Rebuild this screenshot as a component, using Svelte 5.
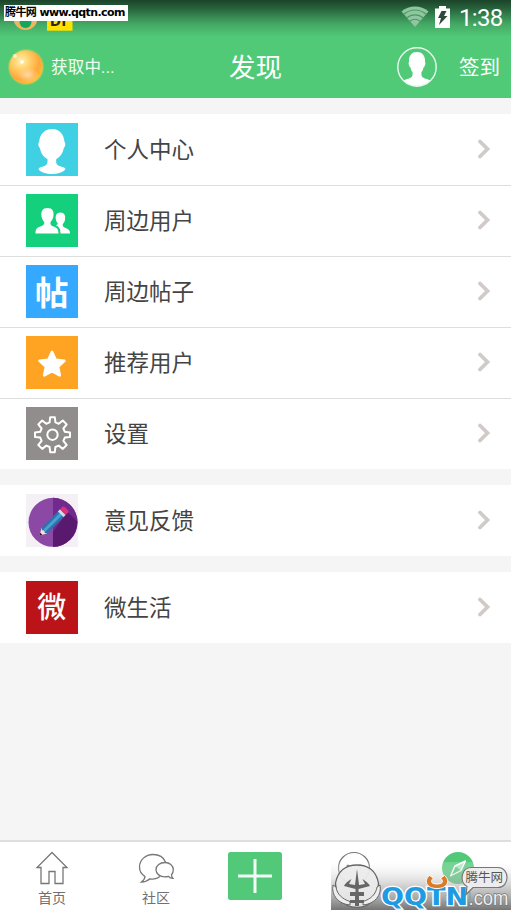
<script>
  const groups = [
    [
      { id: 'person', label: '个人中心', color: '#40d0e4' },
      { id: 'nearby', label: '周边用户', color: '#14cf7b' },
      { id: 'post', label: '周边帖子', color: '#35a9ff' },
      { id: 'star', label: '推荐用户', color: '#ffa322' },
      { id: 'gear', label: '设置', color: '#918d8c' }
    ],
    [{ id: 'pencil', label: '意见反馈', color: '#f4f0f5' }],
    [{ id: 'micro', label: '微生活', color: '#bb1418' }]
  ];
</script>

<div class="screen">
  <header>
    <div class="status">
      <svg class="notice" width="80" height="32" viewBox="0 0 80 32">
        <circle cx="25.500" cy="18" r="12" fill="#eeb660" />
        <ellipse cx="25.500" cy="22" rx="6" ry="6" fill="#16a65a" />
        <path d="M47 12h25.500v18.700H47z" fill="#ffe100" />
        <text x="50" y="26" font-size="17" font-weight="700" fill="#2b2a10">Df</text>
      </svg>
      <div class="system">
        <svg width="28" height="22" viewBox="0 0 28 22">
          <path d="M14 21 .5 5.500C8-1.200 20-1.200 27.500 5.500Z" fill="#8fc6a0" />
          <path d="M2.500 8.500c7-6 16-6 23 0M5.500 12c5-4.300 12-4.300 17 0M8.500 15.500c3.300-2.700 7.700-2.700 11 0" fill="none" stroke="#4c9a66" stroke-width="1.200" />
        </svg>
        <svg class="battery" width="15" height="22" viewBox="0 0 15 22">
          <path d="M0 2.500h4V0h7v2.500h4V22H0z" fill="#fff" />
          <path d="M6.500 5h5L9 10h3.500L4 19l2-7H3z" fill="#2f4a38" />
        </svg>
        <span class="time">1:38</span>
      </div>
    </div>
    <div class="bar">
      <div class="weather">
        <svg width="38" height="38" viewBox="0 0 38 38">
          <defs>
            <radialGradient id="sun" cx=".36" cy=".32" r=".72">
              <stop offset="0" stop-color="#fff3b0" />
              <stop offset=".35" stop-color="#ffd06a" />
              <stop offset=".75" stop-color="#ffa637" />
              <stop offset="1" stop-color="#ffc238" />
            </radialGradient>
            <radialGradient id="shine"><stop offset="0" stop-color="#ffe3bd" stop-opacity=".85" /><stop offset="1" stop-color="#ffd6a0" stop-opacity="0" /></radialGradient>
          </defs>
          <circle cx="19" cy="19" r="18" fill="#e8d34a" opacity=".35" />
          <circle cx="19" cy="19" r="16.800" fill="url(#sun)" />
          <ellipse cx="21" cy="27" rx="11" ry="8" fill="url(#shine)" />
          <circle cx="15" cy="14" r="1.700" fill="#fff" />
          <circle cx="8" cy="8" r="2" fill="#fff8cf" opacity=".8" />
        </svg>
        <span>获取中...</span>
      </div>
      <h1>发现</h1>
      <div class="sign">
        <svg width="42" height="42" viewBox="0 0 42 42">
          <defs><clipPath id="round"><circle cx="21" cy="21" r="19" /></clipPath></defs>
          <path clip-path="url(#round)" fill="#fff" d="M21 6c5.500 0 8.500 4 8 10 1 1-.2 5-1.500 5.500-.5 2-1 3.500-2 4.500-.5 5 1 5.500 5.500 7l6.500 3v6H4v-6l7-3c4.500-1.500 6-2 5.500-7-1-1-1.500-2.500-2-4.500-1.300-.5-2.500-4.500-1.500-5.500C12.500 10 15.500 6 21 6Z" />
          <circle cx="21" cy="21" r="19.200" fill="none" stroke="#e9f9ee" stroke-width="1.400" />
        </svg>
        <span>签到</span>
      </div>
    </div>
    <div class="source">腾牛网 www.qqtn.com</div>
  </header>

  <main>
    {#each groups as group}
      <section>
        {#each group as item}
          <div class="row">
            <div class="tile" style:background={item.color}>
              {#if item.id === 'post' || item.id === 'micro'}
                <span class={item.id}>{item.id === 'post' ? '帖' : '微'}</span>
              {:else}
                <svg width="52" height="52" viewBox="0 0 52 52">
                  {#if item.id === 'person'}
                    <path fill="#fff" d="M26 5c8 0 12 6 12.500 13 1.500 1 .7 5-.7 6-.8 5-3.800 9-7.500 11-.5 4 .2 6 3 7 3 1 6 1.500 6.200 3-2 3.300-8 5-13.500 5s-12-1.700-13.500-5c.2-1.500 3-2 6-3 2.600-1 3.300-3 3-7-4-2-6.800-6-7.600-11-1.500-1-2.200-5-.7-6C13.500 11 18 5 26 5Z" />
                  {:else if item.id === 'nearby'}
                    <path fill="#fff" d="M21.500 13c5 0 6.500 3.500 6 7.500-.3 3-1.500 5-3 6.500-.2 3 .5 3.500 3.500 4.700 3.500 1.300 4.500 3 4.500 6.800h-23c0-3.800.7-5.500 4.200-6.800 4-1.500 4.800-2 4.500-4.700-1.500-1.500-2.500-3.500-2.800-6.500-.4-4 1-7.500 6.100-7.500Z" />
                    <path fill="#fff" d="M34.500 17.500c4 0 5 3 4.600 6.500-.2 2.500-1.200 4-2.400 5.200 0 2.500.8 2.900 3.500 4 3 1.200 3.800 2.500 3.800 5.300h-9.500c0-4-1-6.500-4.500-8.200 1.300-.5 1.800-1 1.700-2-1-1-1.800-2.700-2-4.800-.3-3.200 1-6 4.800-6Z" />
                  {:else if item.id === 'star'}
                    <path fill="#fff" stroke="#fff" stroke-width="2.800" stroke-linejoin="round" d="m26 15 3.600 7.800 8.700 1-6.400 5.900 1.800 8.700-7.700-4.300-7.700 4.300 1.800-8.700-6.400-5.900 8.700-1z" />
                  {:else if item.id === 'gear'}
                    <g fill="none" stroke="#fff" stroke-width="2" stroke-linejoin="round" transform="translate(0 -.8)">
                      <circle cx="26.500" cy="27.500" r="5.200" />
                      <path d="M24.200 10h4.600l.6 5.200 3.300 1.400 4.100-3.300 3.900 3.900-3.300 4.100 1.400 3.300 5.200.6v4.600l-5.200.6-1.400 3.300 3.300 4.100-3.900 3.900-4.100-3.300-3.300 1.400-.6 5.200h-4.600l-.6-5.200-3.300-1.400-4.100 3.300-3.900-3.900 3.300-4.100-1.400-3.300-5.200-.6v-4.600l5.200-.6 1.400-3.300-3.300-4.100 3.900-3.900 4.100 3.300 3.300-1.400z" />
                    </g>
                  {:else}
                    <circle cx="27" cy="27.300" r="24.500" fill="#8b48a5" />
                    <path d="M27 2.800a24.500 24.500 0 0 1 0 49Z" fill="#702a8d" />
                    <path d="m41.500 17 9.600 9.500A24.500 24.500 0 0 1 27 51.800V37Z" fill="#58196f" />
                    <g transform="translate(13.500 40.500) rotate(-45)">
                      <path d="M0 0 7-4v8Z" fill="#f8dfcd" />
                      <path d="m0 0 2.500-1.500v3z" fill="#1c1722" />
                      <path d="M7-4h24v8H7l-1.500-2L7 0 5.500-2z" fill="#2875ae" />
                      <path d="M7-1.500h24v3H7z" fill="#4ba0d1" />
                      <path d="M30-4h3v8h-3z" fill="#d9d8e3" />
                      <path d="M33-4h3.500Q38-4 38-2v4q0 2-1.500 2H33z" fill="#dd307b" />
                    </g>
                  {/if}
                </svg>
              {/if}
            </div>
            <span class="label">{item.label}</span>
            <svg class="chevron" width="14" height="20" viewBox="0 0 14 20"><path d="m3 2.500 7.500 7.500L3 17.500" fill="none" stroke="#d0cbc8" stroke-width="3.800" stroke-linecap="round" /></svg>
          </div>
        {/each}
      </section>
    {/each}
  </main>

  <nav>
    <div class="tab">
      <svg width="36" height="36" viewBox="0 0 36 36"><path d="M18 2.500 3 17.500h4v16h8v-12h6v12h8v-16h4Z" fill="none" stroke="#777" stroke-width="1.300" /></svg>
      <span>首页</span>
    </div>
    <div class="tab">
      <svg width="36" height="36" viewBox="0 0 36 36" fill="none" stroke="#777" stroke-width="1.300">
        <path d="M27.500 12C25.500 7 21 4.500 15 4.500 7.500 4.500 1.500 10 1.500 17c0 4 2 7.300 5.500 9.500 0 2-1.500 4-3.500 5.500 4 0 6-1 8.500-3.200 4 .8 7 .2 10-2.300" />
        <path d="M27 12.500c-5 0-9 3-9 7.200s4 7.200 9 7.200c1.200 0 2.500-.2 3.500-.5 1 1.300 2.500 2 4.500 2-1-1-1.500-2.300-1.500-3.700 1.200-1.300 1.800-3 1.800-5 0-4.200-3.800-7.200-8.300-7.200Z" />
      </svg>
      <span>社区</span>
    </div>
    <div class="tab add">
      <svg width="54" height="48" viewBox="0 0 54 48"><rect width="54" height="48" rx="2.500" fill="#51c979" /><path d="M27 7v34M10 24h34" stroke="#f3fcf6" stroke-width="3" /></svg>
    </div>
    <div class="tab face">
      <svg width="36" height="36" viewBox="0 0 36 36" fill="none" stroke="#777" stroke-width="1.200"><circle cx="18" cy="18" r="15.500" /><circle cx="12" cy="16" r="1" fill="#666" /><circle cx="24" cy="16" r="1" fill="#666" /></svg>
      <span>消息</span>
    </div>
    <div class="tab active">
      <svg width="36" height="36" viewBox="0 0 36 36"><circle cx="18" cy="18" r="16" fill="#51c979" /><path d="M25.500 11 21 20.500 10.500 26 15 16Z" fill="none" stroke="#fff" stroke-width="1.400" stroke-linejoin="round" /><path d="M25.500 11 15 16l6 4.500Z" fill="#fff" fill-opacity=".5" /></svg>
      <span>发现</span>
    </div>
  </nav>

  <svg class="watermark" width="180" height="48" viewBox="0 12 180 48">
    <defs><linearGradient id="shade" x2="0" y2="1"><stop stop-color="#fff" stop-opacity=".18" /><stop offset=".5" stop-color="#aaa" stop-opacity=".55" /><stop offset="1" stop-color="#6d6d6d" stop-opacity=".95" /></linearGradient></defs>
    <path d="M0 12h180v48H0z" fill="url(#shade)" />
    <path d="M4.500 33C7 20 16 15 26 15s19 5 21.500 18c0 11-5 18-12 22.500-5 2.500-14 2.500-19 0C9.500 51 4.500 44 4.500 33Z" fill="#ececec" fill-opacity=".92" stroke="#656565" stroke-width="1.300" />
    <path d="M2 35c-2 10 5 19 17 20v-3.500C11 49 6 44 5 37ZM49 35c2 10-5 19-17 20v-3.500c8-2.500 13-7.500 14-14.500Z" fill="#eee" stroke="#666" stroke-width="1" />
    <path d="m26 19-2 16-6-1 2.500-5c-4 2-6.500 5-7.500 7l11.500 3v3H19v4h5v4h-5v3h5v3h4v-3h5v-3h-5v-4h5v-4h-5.500v-3L39 36c-1-2-4-5-7.500-7l2.500 5-6 1Z" fill="#666" />
    <text x="50" y="55" class="brand" textLength="87" lengthAdjust="spacingAndGlyphs">QQTN</text>
    <path d="M98.500 25.500c-6 5-3.500 13 7.500 13s13.500-8 7.500-13l-4 2.500c4 4 1.500 6-3.500 6s-7.500-2-3.500-6Z" fill="#dd7a2a" stroke="#fff" stroke-width="1" />
    <text x="137.500" y="55" class="com" textLength="40" lengthAdjust="spacingAndGlyphs">.com</text>
    <path d="M140 17.500h27c12 0 12 20 0 20h-25l-7 7 1-8c-8-4-6-19 4-19Z" fill="#ededed" stroke="#777" stroke-width="1.200" />
    <text x="134.500" y="32" class="bubble">腾牛网</text>
  </svg>
</div>

<style>
  :global(body) { margin: 0; }
  .screen {
    position: relative;
    display: flex;
    flex-direction: column;
    box-sizing: border-box;
    width: 511px;
    height: 910px;
    overflow: hidden;
    background: #f5f5f5;
    color: #444;
    font-family: Roboto, 'Noto Sans CJK SC', sans-serif;
  }
  svg { display: block; flex: none; }
  header {
    position: relative;
    height: 98px;
    color: #fff;
    background: linear-gradient(#1c4329 0, #26603a 8px, #43a864 24px, #51ca78 37px);
  }
  .status { display: flex; justify-content: space-between; height: 36px; }
  .system { display: flex; padding: 6px 9px 0 0; }
  .battery { margin-left: 6px; }
  .time { margin-left: 9px; font-size: 24px; line-height: 25px; width: 43px; white-space: nowrap; letter-spacing: -.7px; }
  .bar { display: grid; grid-template-columns: 1fr 1fr 1fr; align-items: center; height: 62px; }
  .weather { display: flex; align-items: center; padding-left: 7px; gap: 6px; font-size: 16.500px; }
  .weather span { color: #f2fff6; padding-bottom: 2px; letter-spacing: .2px; }
  h1 { margin: 0; text-align: center; font-size: 26.500px; font-weight: 400; line-height: 61px; }
  .sign { display: flex; align-items: center; justify-content: flex-end; gap: 21px; padding-right: 11px; font-size: 20.500px; }
  .sign span { padding-bottom: 3px; }
  .source {
    position: absolute;
    left: 4px;
    top: 5px;
    box-sizing: border-box;
    width: 124px;
    height: 16px;
    padding-left: 1px;
    background: #fff;
    color: #000;
    font: 700 11px/16px 'DejaVu Sans', 'Noto Sans CJK SC', sans-serif;
    letter-spacing: -.6px;
    white-space: nowrap;
  }
  main { display: flex; flex-direction: column; gap: 16px; padding-top: 16px; flex: 1; }
  section { background: #fff; }
  .row { display: flex; align-items: center; box-sizing: border-box; height: 71px; padding: 0 20px 0 25.500px; }
  .row + .row { box-shadow: inset 0 1px #dedede; }
  .tile { display: flex; align-items: center; justify-content: center; width: 52.500px; height: 52.500px; overflow: hidden; color: #fff; }
  .post { font: 700 33.500px/49px 'Noto Sans CJK SC', sans-serif; height: 52px; }
  .micro { font: 500 29px/46px 'Noto Sans CJK SC', sans-serif; height: 52px; }
  .label { flex: 1; margin-left: 26px; font-size: 22.500px; line-height: 32px; }
  .chevron { margin-bottom: 2px; }
  nav { display: flex; height: 68px; border-top: 2px solid #dedede; background: #fff; }
  .tab { display: flex; flex: none; flex-direction: column; align-items: center; width: 104px; padding-top: 8px; font-size: 14px; color: #707070; }
  .tab span { line-height: 20px; margin-top: 2px; }
  .tab.add { width: 94px; padding-top: 10px; height: 58px; }
  .tab.face { width: 103px; }
  .tab.active { width: 102px; padding-left: 4px; box-sizing: border-box; color: #51c979; }
  .watermark { position: absolute; right: 0; bottom: 0; overflow: visible; }
  .brand { font: 700 24px 'DejaVu Sans', sans-serif; fill: #1f9be2; stroke: #fff; stroke-width: 2.500px; paint-order: stroke; }
  .com { font: 400 20px 'Liberation Sans', sans-serif; fill: #eee; stroke: #777; stroke-width: 1.500px; paint-order: stroke; }
  .bubble { font: 400 12.500px 'Noto Sans CJK SC', sans-serif; fill: #555; }
</style>
